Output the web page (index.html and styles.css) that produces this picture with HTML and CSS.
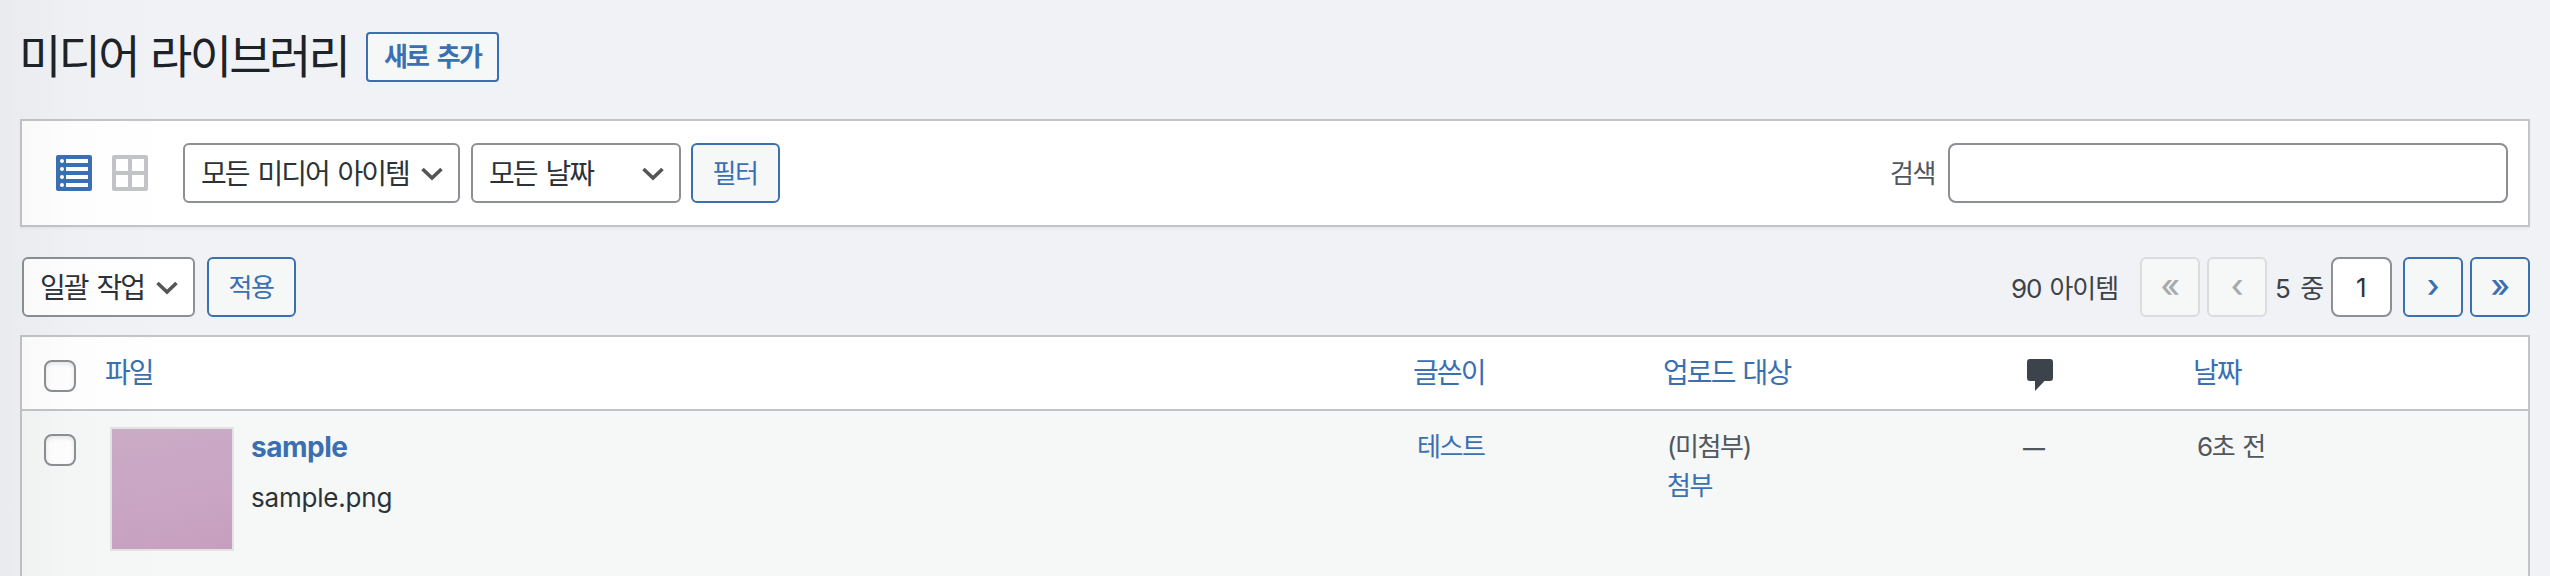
FILE: index.html
```html
<!DOCTYPE html>
<html lang="ko">
<head>
  <meta charset="UTF-8">
  <meta name="viewport" content="width=device-width, initial-scale=1.0">
  <title>미디어 라이브러리</title>
  <link rel="stylesheet" href="styles.css">
</head>
<body>
  <div class="wrap">
    <div class="page-header">
      <h1 class="page-title">미디어 라이브러리</h1>
      <a class="page-title-action">새로 추가</a>
    </div>

    <div class="wp-filter">
      <div class="view-switch">
        <svg class="view-icon view-list" viewBox="0 0 36 36">
          <rect width="36" height="36" rx="2" fill="currentColor"/>
          <g fill="#fff">
            <circle cx="6" cy="6" r="2"/><rect x="10" y="4" width="22" height="4"/>
            <circle cx="6" cy="14" r="2"/><rect x="10" y="12" width="22" height="4"/>
            <circle cx="6" cy="22" r="2"/><rect x="10" y="20" width="22" height="4"/>
            <circle cx="6" cy="30" r="2"/><rect x="10" y="28" width="22" height="4"/>
          </g>
        </svg>
        <svg class="view-icon view-grid" viewBox="0 0 36 36">
          <rect width="36" height="36" rx="2" fill="currentColor"/>
          <path fill="#fff" d="M4 4h12v12H4zM20 4h12v12H20zM4 20h12v12H4zM20 20h12v12H20z"/>
        </svg>
      </div>
      <div class="select select-type">
        <span>모든 미디어 아이템</span>
        <svg class="arrow" viewBox="0 0 22 14"><path d="M1.500 2L11 11L20.500 2"/></svg>
      </div>
      <div class="select select-date">
        <span>모든 날짜</span>
        <svg class="arrow" viewBox="0 0 22 14"><path d="M1.500 2L11 11L20.500 2"/></svg>
      </div>
      <button class="button">필터</button>
      <div class="search-form">
        <label for="media-search">검색</label>
        <input type="search" id="media-search">
      </div>
    </div>

    <div class="tablenav">
      <div class="select select-bulk">
        <span>일괄 작업</span>
        <svg class="arrow" viewBox="0 0 22 14"><path d="M1.500 2L11 11L20.500 2"/></svg>
      </div>
      <button class="button">적용</button>
      <div class="pagination">
        <span class="displaying-num">90 아이템</span>
        <span class="page-button disabled">«</span>
        <span class="page-button disabled">‹</span>
        <span class="paging-text">5 중</span>
        <input class="current-page" type="text" value="1">
        <a class="page-button">›</a>
        <a class="page-button">»</a>
      </div>
    </div>

    <div class="media-table">
      <div class="row table-head">
        <div class="cell"><input type="checkbox" class="check"></div>
        <div class="cell"><a>파일</a></div>
        <div class="cell"><a>글쓴이</a></div>
        <div class="cell"><a>업로드 대상</a></div>
        <div class="cell">
          <svg class="comment-icon" viewBox="0 0 26 32"><path d="M3 0h20a3 3 0 0 1 3 3v16a3 3 0 0 1-3 3h-5.500L8 32V22H3a3 3 0 0 1-3-3V3a3 3 0 0 1 3-3z"/></svg>
        </div>
        <div class="cell"><a>날짜</a></div>
      </div>
      <div class="row table-row">
        <div class="cell"><input type="checkbox" class="check"></div>
        <div class="cell media-file">
          <div class="thumb"></div>
          <div class="media-name">
            <a class="media-title">sample</a>
            <p class="filename">sample.png</p>
          </div>
        </div>
        <div class="cell"><a>테스트</a></div>
        <div class="cell">(미첨부)<br><a>첨부</a></div>
        <div class="cell"><span class="no-comments">—</span></div>
        <div class="cell">6초 전</div>
      </div>
    </div>
  </div>
</body>
</html>
```
FILE: styles.css
```css
* {
  box-sizing: border-box;
}

body {
  margin: 0;
  height: 576px;
  overflow: hidden;
  position: relative;
  background: #f1f2f6;
  color: #2c3338;
  font-family: Inter, "Noto Sans CJK KR", sans-serif;
  font-size: 26px;
  letter-spacing: -1.4px;
  word-spacing: 2px;
}

body::before {
  content: "";
  position: absolute;
  z-index: 1;
  top: 0;
  left: 0;
  width: 180px;
  height: 100%;
  background: linear-gradient(to right, rgba(0, 0, 0, .03), rgba(0, 0, 0, .008) 40%, rgba(0, 0, 0, 0));
  pointer-events: none;
}

input,
button {
  font: inherit;
  letter-spacing: inherit;
  margin: 0;
}

a {
  color: #3a70b2;
}

.wrap {
  padding: 0 20px;
}

.page-header {
  display: flex;
  align-items: center;
  height: 114px;
  padding-bottom: 1px;
}

.page-title {
  margin: -2px 21px 0 -1px;
  width: 326px;
  white-space: nowrap;
  font-size: 46px;
  font-weight: 400;
  line-height: 60px;
  letter-spacing: -2.7px;
  color: #1d2327;
}

.page-title-action {
  width: 133px;
  height: 50px;
  border: 2px solid #3a70b2;
  border-radius: 4px;
  background: #f6f7f7;
  font-weight: 600;
  line-height: 46px;
  letter-spacing: -1.8px;
  word-spacing: 4px;
  text-align: center;
}

.wp-filter {
  display: flex;
  align-items: center;
  height: 108px;
  margin-top: 5px;
  padding: 0 20px 0 34px;
  border: 2px solid #c3c4c7;
  background: #fff;
  box-shadow: 0 2px 2px rgba(0, 0, 0, .04);
}

.view-switch {
  display: flex;
  gap: 20px;
  margin: 0 35px 0 0;
}

.view-icon {
  width: 36px;
  height: 36px;
}

.view-list {
  color: #3a70b2;
}

.view-grid {
  color: #c3c4c7;
}

.select {
  display: flex;
  align-items: center;
  justify-content: space-between;
  height: 60px;
  padding: 0 15px 0 16px;
  border: 2px solid #8c8f94;
  border-radius: 6px;
  background: #fff;
  font-size: 28px;
  letter-spacing: -2px;
  word-spacing: 3px;
  white-space: nowrap;
}

.select span {
  margin-top: -3px;
}

.select-type {
  width: 277px;
}

.select-date {
  width: 210px;
  margin: 0 10px 0 11px;
}

.select-bulk {
  width: 173px;
  margin: 0 12px 0 2px;
}

.arrow {
  flex: none;
  width: 22px;
  height: 14px;
  margin-top: 2px;
  fill: none;
  stroke: #555;
  stroke-width: 3.6;
}

.button {
  width: 89px;
  height: 60px;
  padding: 0 1px 3px 0;
  border: 2px solid #3a70b2;
  border-radius: 6px;
  background: #f6f7f7;
  color: #3a70b2;
}

.search-form {
  display: flex;
  align-items: center;
  gap: 13px;
  margin-left: auto;
  color: #50575e;
}

.search-form label {
  margin-top: -3px;
}

.search-form input {
  width: 560px;
  height: 60px;
  border: 2px solid #8c8f94;
  border-radius: 8px;
  background: #fff;
}

.tablenav {
  display: flex;
  align-items: center;
  height: 60px;
  margin: 30px 0 18px;
}

.pagination {
  display: flex;
  align-items: center;
  margin-left: auto;
  color: #3c434a;
}

.displaying-num {
  margin: -2px 22px 0 0;
  letter-spacing: -1.1px;
}

.page-button {
  width: 60px;
  height: 60px;
  margin-left: 7px;
  padding-right: 1px;
  border: 2px solid #3a70b2;
  border-radius: 6px;
  background: #f6f7f7;
  font-size: 32px;
  font-weight: 500;
  line-height: 54px;
  text-align: center;
}

.displaying-num + .page-button {
  margin-left: 0;
}

.page-button.disabled {
  border-color: #dcdcde;
  color: #a7aaad;
}

.paging-text {
  width: 64px;
  margin-top: -2px;
  padding-left: 8px;
  word-spacing: 5px;
}

.current-page {
  width: 61px;
  height: 60px;
  margin-right: 4px;
  padding: 0 2px 0 0;
  border: 2px solid #8c8f94;
  border-radius: 8px;
  background: #fff;
  color: #2c3338;
  text-align: center;
}

.media-table {
  border: 2px solid #c3c4c7;
  border-bottom: 0;
  background: #fff;
}

.row {
  display: grid;
  grid-template-columns: 83px 1308px 250px 364px 166px 1fr;
}

.table-head {
  height: 74px;
  border-bottom: 2px solid #c3c4c7;
  font-size: 28px;
  line-height: 72px;
  letter-spacing: -1.9px;
}

.table-row {
  height: 165px;
  padding-top: 16px;
  background: #f6f7f7;
  line-height: 39px;
  color: #50575e;
}

.table-row .cell:nth-child(n+3) {
  padding-left: 4px;
}

.check {
  appearance: none;
  display: block;
  width: 32px;
  height: 32px;
  margin: 7px 0 0 22px;
  border: 2px solid #8c8f94;
  border-radius: 8px;
  background: #fff;
  box-shadow: inset 0 2px 4px rgba(0, 0, 0, .1);
}

.table-head .check {
  margin-top: 23px;
}

.comment-icon {
  display: block;
  width: 26px;
  height: 32px;
  margin-top: 22px;
  fill: #3c434a;
}

.no-comments {
  margin-left: -8px;
  font-size: 22px;
  font-weight: 600;
}

.media-file {
  display: flex;
  gap: 17px;
  padding-left: 5px;
}

.thumb {
  width: 124px;
  height: 124px;
  border: 2px solid #e2e4e4;
  background: linear-gradient(165deg, #cbacc6, #caa6c5 50%, #c79fbe);
}

.media-name {
  padding-top: 1px;
  letter-spacing: -.2px;
}

.media-title {
  font-size: 28px;
  font-weight: 700;
  letter-spacing: -.5px;
}

.filename {
  margin: 11px 0 0;
  color: #2c3338;
}
```
